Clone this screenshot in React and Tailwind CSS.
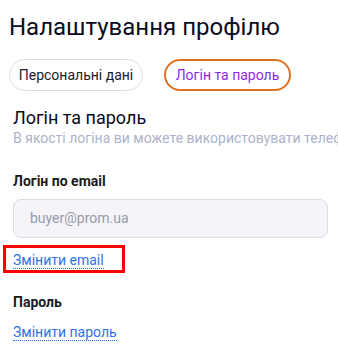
import React from 'react';

const App = () => {
  return (
    <div className="w-[338px] h-[361px] bg-white overflow-hidden font-['Roboto',sans-serif] text-[#1a1a1a]">
      <div className="pl-[9px] pt-[12px]">
        <h1 className="text-[24px] leading-[30px] font-normal text-[#0b0b1e]">Налаштування профілю</h1>

        <div className="flex gap-[21px] mt-[17px]">
          <button className="h-[32px] w-[134px] rounded-full border border-[#dedde9] text-[14px] text-[#1b1b2e]">
            Персональні дані
          </button>
          <button className="h-[32px] w-[127px] rounded-full border-2 border-[#de7020] text-[14px] text-[#8b2be4]">
            Логін та пароль
          </button>
        </div>
      </div>

      <div className="pl-[13px] mt-[16px]">
        <h2 className="text-[18px] leading-[22px] text-[#0b0b1e]">Логін та пароль</h2>
        <p className="text-[14px] leading-[18px] text-[#aeb3cb] whitespace-nowrap">
          В якості логіна ви можете використовувати телефон
        </p>

        <div className="mt-[25px] text-[14px] font-bold leading-[18px]">Логін по email</div>

        <div className="mt-[9px] mr-[10px] h-[39px] rounded-[8px] border border-[#dcdce8] bg-[#f4f4f9] flex items-center pl-[16px] text-[14px] text-[#9a9aa8]">
          buyer@prom.ua
        </div>

        <div className="-ml-[10px] mt-[7px] w-[122px] h-[28px] border-[3px] border-[#ff0000] pl-[7px]">
          <a className="text-[14px] leading-[18px] text-[#2e73e8] border-b border-dotted border-[#2e73e8]">
            Змінити email
          </a>
        </div>

        <div className="mt-[20px] text-[14px] font-bold leading-[18px]">Пароль</div>

        <div className="mt-[9px]">
          <a className="text-[14px] leading-[18px] text-[#2e73e8] border-b border-dotted border-[#2e73e8]">
            Змінити пароль
          </a>
        </div>
      </div>
    </div>
  );
};

export default App;
